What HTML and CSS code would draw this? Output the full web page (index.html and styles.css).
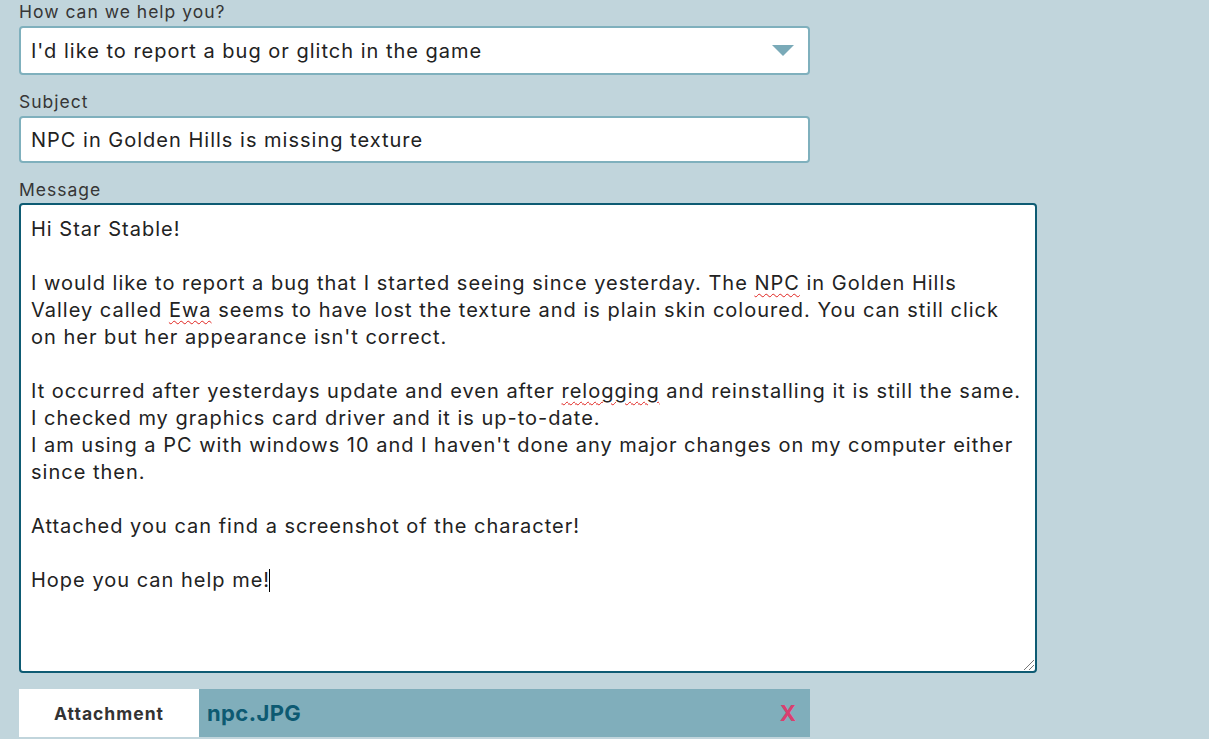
FILE: index.html
```html
<!DOCTYPE html>
<html>
<head>
<meta charset="utf-8">
<link rel="stylesheet" href="styles.css">
</head>
<body>
<form class="form">
  <label class="label">How can we help you?</label>
  <div class="select">
    <span class="select-text">I'd like to report a bug or glitch in the game</span>
    <svg class="arrow" width="22" height="12" viewBox="0 0 22 12"><polygon points="0,0 22,0 11,11" fill="#7aaab8"/></svg>
  </div>
  <label class="label">Subject</label>
  <div class="input">NPC in Golden Hills is missing texture</div>
  <label class="label">Message</label>
  <div class="textarea"><div class="msg">Hi Star Stable!

I would like to report a bug that I started seeing since yesterday. The <span class="sp">NPC</span> in Golden Hills
Valley called <span class="sp">Ewa</span> seems to have lost the texture and is plain skin coloured. You can still click
on her but her appearance isn't correct.

It occurred after yesterdays update and even after <span class="sp">relogging</span> and reinstalling it is still the same.
I checked my graphics card driver and it is up-to-date.
I am using a PC with windows 10 and I haven't done any major changes on my computer either
since then.

Attached you can find a screenshot of the character!

Hope you can help me!<span class="caret"></span></div><span class="grip"></span></div>
  <div class="attach">
    <div class="attach-label">Attachment</div>
    <div class="attach-file">
      <span class="file-name">npc.JPG</span>
      <span class="remove">X</span>
    </div>
  </div>
</form>
</body>
</html>
```
FILE: styles.css
```css
html, body {
  margin: 0;
  padding: 0;
  background: #c1d5dc;
}
body {
  font-family: Inter, "Open Sans", sans-serif;
  color: #222;
}
.form {
  display: flex;
  flex-direction: column;
  align-items: flex-start;
  padding: 2px 0 0 19px;
}
.label {
  font-size: 17.5px;
  line-height: 20px;
  letter-spacing: 1px;
  color: #363636;
  height: 20px;
}
.select {
  box-sizing: border-box;
  margin-top: 4px;
  width: 791px;
  height: 49px;
  border: 2px solid #7fb0bd;
  border-radius: 4px;
  background: #fff;
  display: flex;
  align-items: center;
  justify-content: space-between;
  padding: 0 14px 0 10px;
  margin-bottom: 17px;
}
.select-text, .input, .msg {
  font-size: 20px;
  letter-spacing: 1px;
  color: #222;
}
.arrow {
  display: block;
}
.input {
  box-sizing: border-box;
  margin-top: 4px;
  width: 791px;
  height: 47px;
  border: 2px solid #7fb0bd;
  border-radius: 4px;
  background: #fff;
  display: flex;
  align-items: center;
  padding: 0 10px;
  margin-bottom: 17px;
}
.textarea {
  position: relative;
  box-sizing: border-box;
  margin-top: 3px;
  width: 1018px;
  height: 470px;
  border: 2px solid #0e5b73;
  border-radius: 4px;
  background: #fff;
  padding: 11px 10px;
}
.msg {
  white-space: pre;
  line-height: 27px;
}
.sp {
  text-decoration: underline wavy #e0231f;
  text-decoration-thickness: 1px;
  text-underline-offset: 3px;
}
.caret {
  display: inline-block;
  width: 1px;
  height: 23px;
  background: #000;
  vertical-align: -5px;
  margin-left: -1px;
}
.grip {
  position: absolute;
  right: 1px;
  bottom: 1px;
  width: 10px;
  height: 10px;
  background:
    linear-gradient(135deg, transparent 0 45%, #777 45% 52%, transparent 52% 70%, #777 70% 77%, transparent 77%);
}
.attach {
  margin-top: 16px;
  display: flex;
  height: 48px;
  width: 791px;
}
.attach-label {
  width: 180px;
  background: #fff;
  display: flex;
  align-items: center;
  justify-content: center;
  font-weight: 700;
  font-size: 17.5px;
  letter-spacing: 1px;
  color: #333;
}
.attach-file {
  flex: 1;
  background: #80aebb;
  display: flex;
  align-items: center;
  justify-content: space-between;
  padding: 0 14px 0 8px;
}
.file-name {
  font-weight: 700;
  font-size: 22px;
  letter-spacing: 0.4px;
  color: #0d5a72;
}
.remove {
  font-weight: 700;
  font-size: 22px;
  color: #d9406f;
}
```
